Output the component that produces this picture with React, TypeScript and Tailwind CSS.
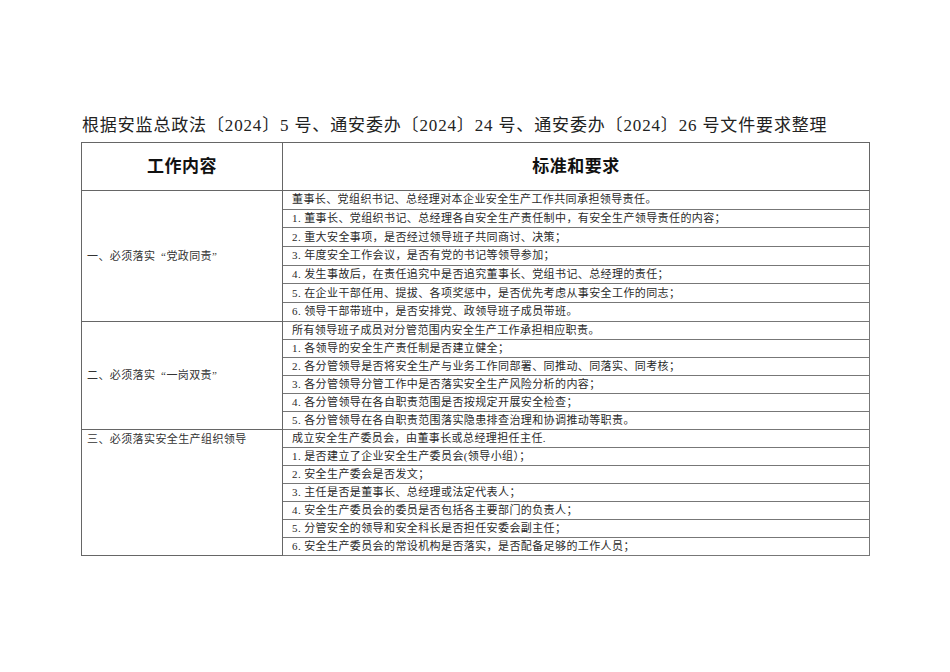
import React from "react"

type Section = {
    label: React.ReactNode
    top?: boolean
    rowH: string
    intro: string
    items: string[]
}

// full-width curly quotes, glyph hugging the quoted text
const Q = ({ children }: { children: React.ReactNode }) => (
    <>
        <span className="inline-block w-[1em] text-right">“</span>
        {children}
        <span className="inline-block w-[1em] text-left">”</span>
    </>
)

const sections: Section[] = [
    {
        label: <>一、必须落实<Q>党政同责</Q></>,
        rowH: "h-[18.7px]",
        intro: "董事长、党组织书记、总经理对本企业安全生产工作共同承担领导责任。",
        items: [
            "1. 董事长、党组织书记、总经理各自安全生产责任制中，有安全生产领导责任的内容；",
            "2. 重大安全事项，是否经过领导班子共同商讨、决策；",
            "3. 年度安全工作会议，是否有党的书记等领导参加；",
            "4. 发生事故后，在责任追究中是否追究董事长、党组书记、总经理的责任；",
            "5. 在企业干部任用、提拔、各项奖惩中，是否优先考虑从事安全工作的同志；",
            "6. 领导干部带班中，是否安排党、政领导班子成员带班。",
        ],
    },
    {
        label: <>二、必须落实<Q>一岗双责</Q></>,
        rowH: "h-[18px]",
        intro: "所有领导班子成员对分管范围内安全生产工作承担相应职责。",
        items: [
            "1. 各领导的安全生产责任制是否建立健全；",
            "2. 各分管领导是否将安全生产与业务工作同部署、同推动、同落实、同考核；",
            "3. 各分管领导分管工作中是否落实安全生产风险分析的内容；",
            "4. 各分管领导在各自职责范围是否按规定开展安全检查；",
            "5. 各分管领导在各自职责范围落实隐患排查治理和协调推动等职责。",
        ],
    },
    {
        label: "三、必须落实安全生产组织领导",
        top: true,
        rowH: "h-[18.1px]",
        intro: "成立安全生产委员会，由董事长或总经理担任主任.",
        items: [
            "1. 是否建立了企业安全生产委员会(领导小组）；",
            "2. 安全生产委会是否发文；",
            "3. 主任是否是董事长、总经理或法定代表人；",
            "4. 安全生产委员会的委员是否包括各主要部门的负责人；",
            "5. 分管安全的领导和安全科长是否担任安委会副主任；",
            "6. 安全生产委员会的常设机构是否落实，是否配备足够的工作人员；",
        ],
    },
]

const font = { fontFamily: '"Liberation Serif", "Noto Sans CJK SC", serif' }

export default function App() {
    return (
        <div className="min-h-[672px] w-[950px] bg-white text-[#222]" style={font}>
            <div className="pl-[81px] pt-[114px]">
                {/* Title */}
                <h1 className="text-[17px] leading-[24px] tracking-[0.85px] text-[#222] ml-[1px] mb-[4px]">
                    根据安监总政法〔2024〕5 号、通安委办〔2024〕24 号、通安委办〔2024〕26 号文件要求整理
                </h1>

                {/* Table */}
                <table className="border-collapse w-[788px] table-fixed">
                    <colgroup>
                        <col className="w-[201px]" />
                        <col className="w-[587px]" />
                    </colgroup>
                    <thead>
                        <tr className="h-[48px]">
                            <th className="border border-[#666] text-[17px] font-bold tracking-[0.5px] text-[#111]">
                                工作内容
                            </th>
                            <th className="border border-[#666] text-[17px] font-bold tracking-[0.5px] text-[#111]">
                                标准和要求
                            </th>
                        </tr>
                    </thead>
                    <tbody>
                        {sections.map((s, si) =>
                            [s.intro, ...s.items].map((line, i) => (
                                <tr key={si + "-" + i} className={s.rowH}>
                                    {i === 0 && (
                                        <td
                                            rowSpan={s.items.length + 1}
                                            className={`border border-[#666] pl-[5px] pr-[4px] text-[11px] leading-[16px] tracking-[0.4px] text-[#333] ${s.top ? "align-top pt-[1px]" : "align-middle"}`}
                                        >
                                            {s.label}
                                        </td>
                                    )}
                                    <td className="border border-[#777] pl-[9px] pr-[4px] py-0 text-[11px] leading-[17px] tracking-[0.4px] text-[#2a2a2a] whitespace-nowrap">
                                        {line}
                                    </td>
                                </tr>
                            ))
                        )}
                    </tbody>
                </table>
            </div>
        </div>
    )
}
